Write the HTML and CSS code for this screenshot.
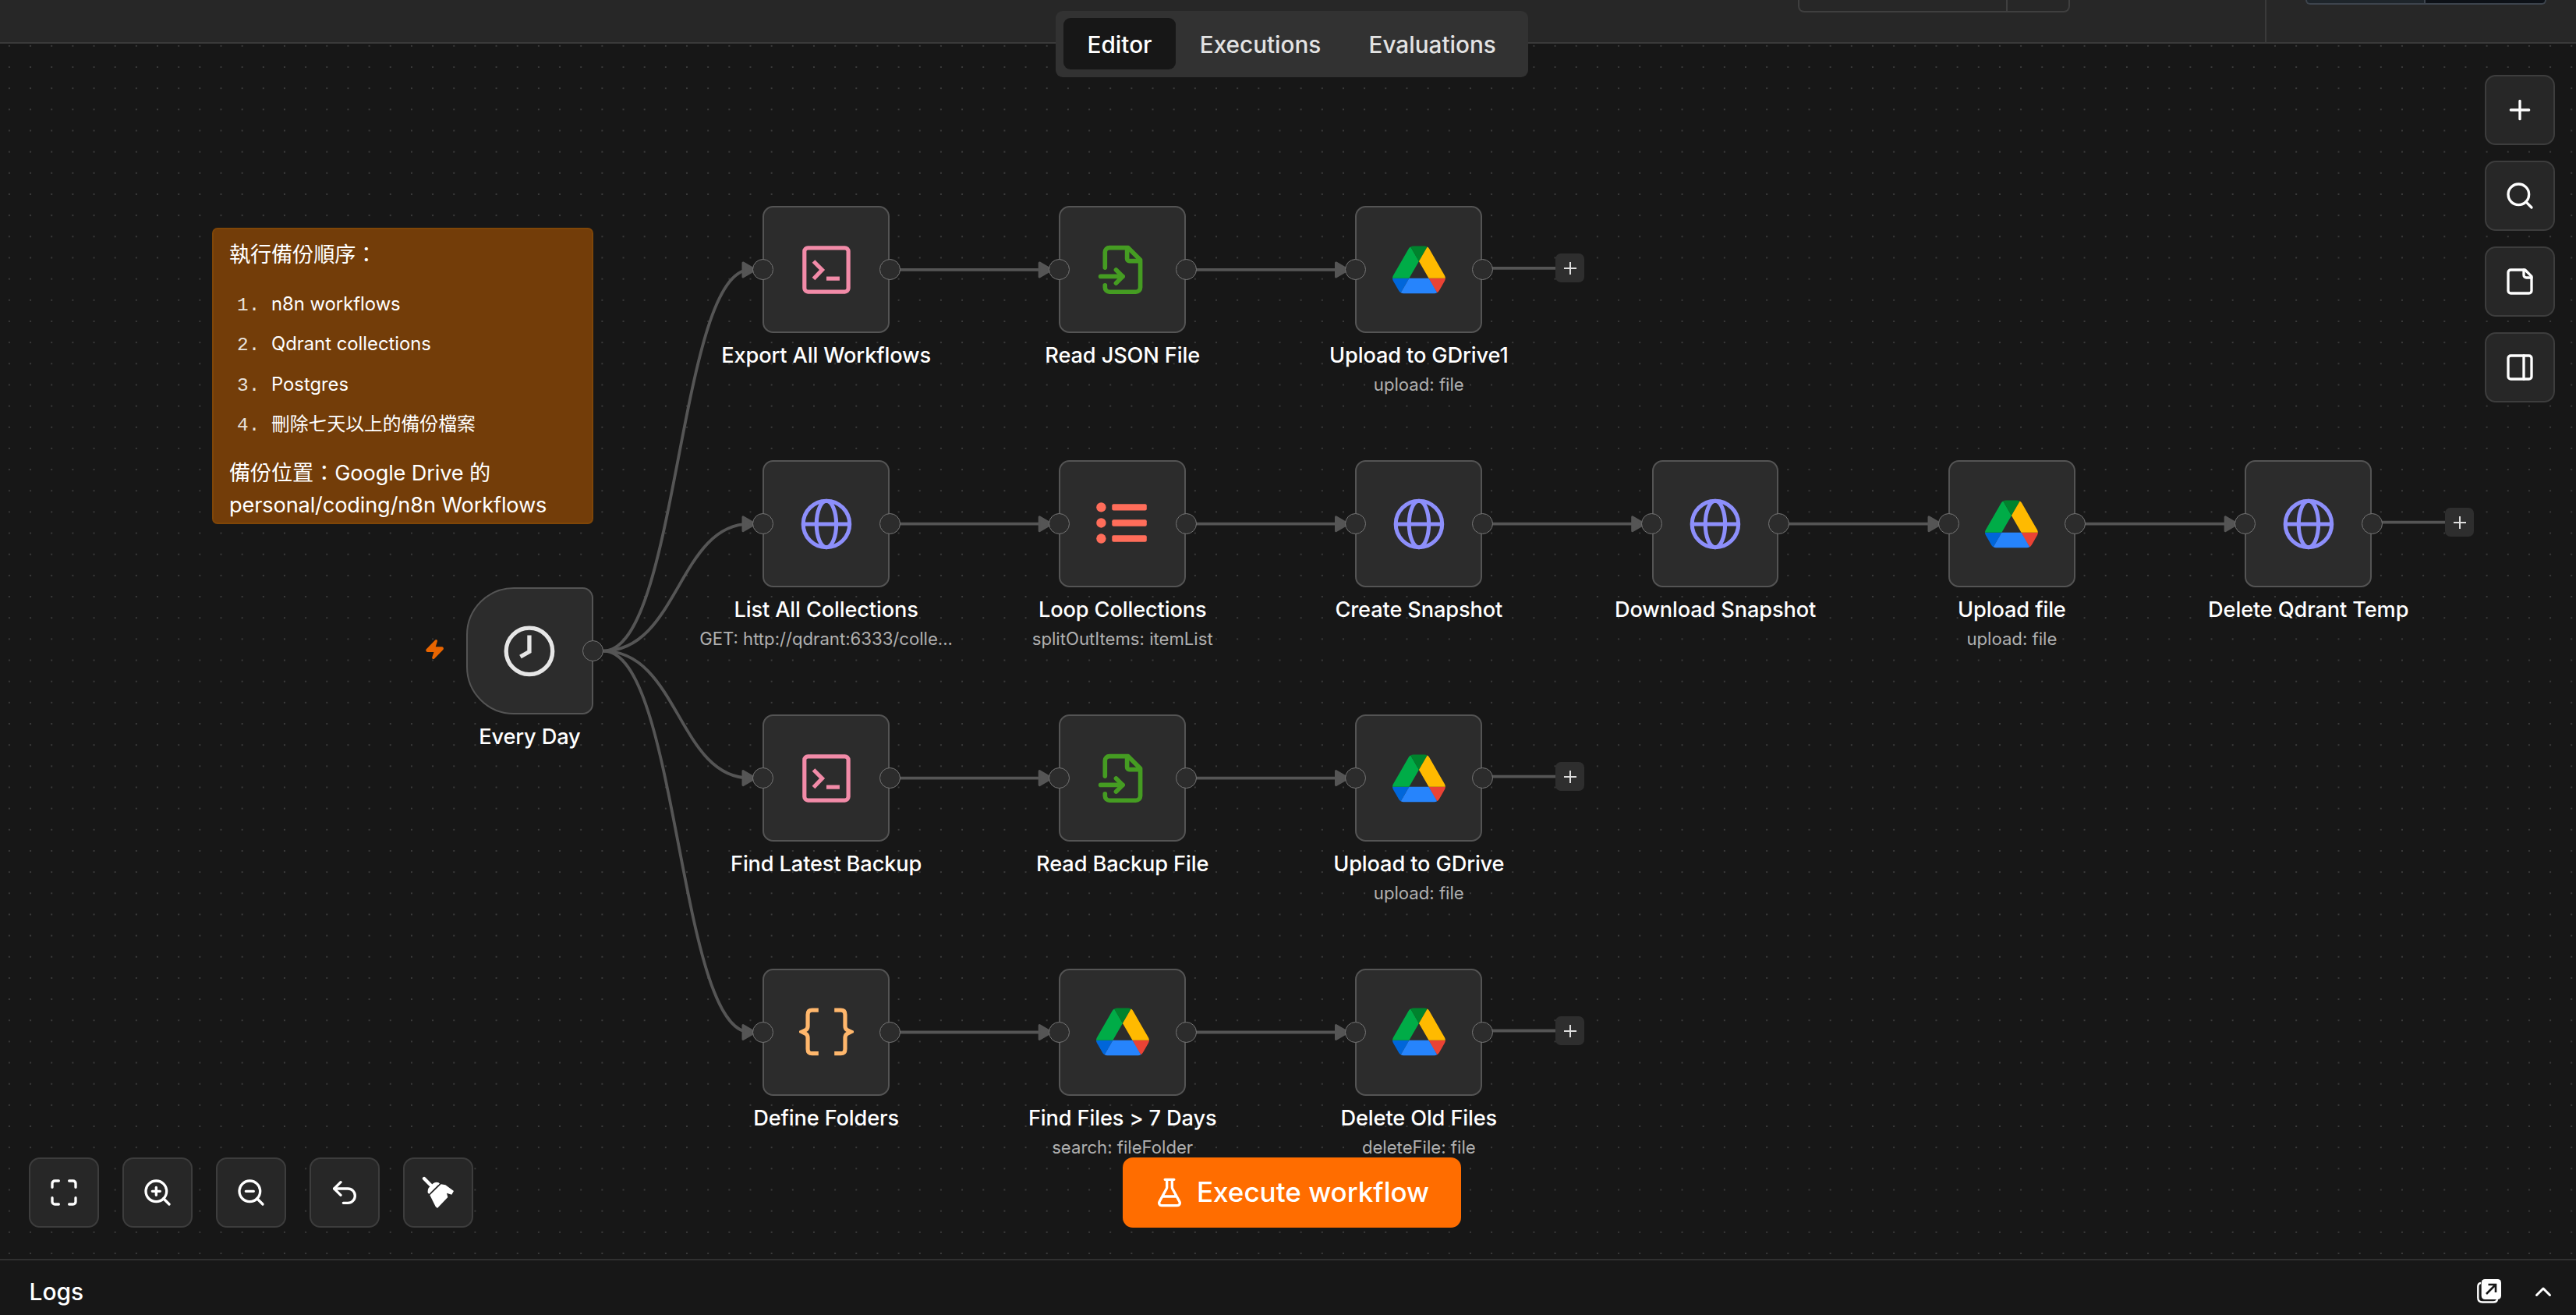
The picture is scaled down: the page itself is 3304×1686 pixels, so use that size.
FILE: index.html
```html
<!DOCTYPE html>
<html lang="zh-Hant">
<head>
<meta charset="utf-8">
<title>Workflow editor</title>
<link rel="stylesheet" href="styles.css">
</head>
<body>
<svg class="sprite" aria-hidden="true">
  <symbol id="i-terminal" viewBox="0 0 68 68"><g fill="none" stroke="#f28ba8" stroke-width="5.2"><rect x="5.8" y="5.8" width="56.4" height="56.4" rx="4.5"/><path d="M17.5 23 28.5 34 17.5 45.5"/><path d="M34 45.2h17"/></g></symbol>
  <symbol id="i-file" viewBox="0 0 24 24"><g fill="none" stroke="#459c22" stroke-width="2" stroke-linecap="round" stroke-linejoin="round"><path d="M4 11V4a2 2 0 0 1 2-2h8.500L20 7.500V20a2 2 0 0 1-2 2H6a2 2 0 0 1-2-2v-1"/><path d="M14 2.500V7a1 1 0 0 0 1 1h4.500"/><path d="M2 15h10"/><path d="m9 18 3-3-3-3"/></g></symbol>
  <symbol id="i-globe" viewBox="0 0 68 68"><g fill="none" stroke="#8d8ffb" stroke-width="5.1"><circle cx="34" cy="34" r="29.800"/><ellipse cx="34" cy="34" rx="12.700" ry="29.800"/><path d="M4 34h60"/></g></symbol>
  <symbol id="i-list" viewBox="0 0 68 68"><g fill="#ff6d5a"><circle cx="6.400" cy="12.400" r="6.200"/><circle cx="6.400" cy="32.500" r="6.200"/><circle cx="6.400" cy="52.600" r="6.200"/><rect x="20.300" y="8.200" width="44.600" height="8.400" rx="2"/><rect x="20.300" y="28.300" width="44.600" height="8.400" rx="2"/><rect x="20.300" y="48.400" width="44.600" height="8.400" rx="2"/></g></symbol>
  <symbol id="i-braces" viewBox="0 0 70 68"><g fill="none" stroke="#ffb76c" stroke-width="5.200"><path d="M24.800 6.200H16.500Q11 6.200 11 12V26.500Q11 30 8.500 31.500L3.500 34 8.500 36.500Q11 38 11 41.500V56Q11 61.800 16.500 61.800H24.800"/><path d="M45.200 6.200H53.500Q59 6.200 59 12V26.500Q59 30 61.500 31.500L66.500 34 61.500 36.500Q59 38 59 41.500V56Q59 61.800 53.500 61.800H45.200"/></g></symbol>
  <symbol id="i-clock" viewBox="0 0 68 68"><g fill="none" stroke="#e6e6e6" stroke-width="5.300"><circle cx="34" cy="34" r="29.800"/><path d="M34 13.500V34.500L22.500 41"/></g></symbol>
  <symbol id="i-drive" viewBox="0 0 87.300 78"><path d="m6.600 66.850 3.850 6.650c.8 1.400 1.950 2.500 3.300 3.300l13.750-23.800h-27.500c0 1.550.4 3.100 1.200 4.500z" fill="#0066da"/><path d="m43.650 25-13.750-23.800c-1.350.8-2.500 1.900-3.300 3.300l-25.400 44a9.060 9.060 0 0 0 -1.200 4.500h27.500z" fill="#00ac47"/><path d="m73.550 76.800c1.350-.8 2.500-1.900 3.300-3.300l1.600-2.750 7.650-13.250c.8-1.400 1.200-2.950 1.200-4.500h-27.502l5.852 11.500z" fill="#ea4335"/><path d="m43.650 25 13.750-23.800c-1.350-.8-2.900-1.200-4.500-1.200h-18.500c-1.600 0-3.150.45-4.500 1.200z" fill="#00832d"/><path d="m59.800 53h-32.300l-13.750 23.800c1.350.8 2.900 1.200 4.500 1.200h50.800c1.600 0 3.150-.45 4.500-1.200z" fill="#2684fc"/><path d="m73.400 26.500-12.700-22c-.8-1.400-1.950-2.500-3.300-3.300l-13.750 23.800 16.150 28h27.450c0-1.550-.4-3.100-1.200-4.500z" fill="#ffba00"/></symbol>
</svg>

<header class="topbar">
  <div class="field"><span class="field-main"></span><span class="field-end"></span></div>
  <div class="star"><span class="star-label"></span><span class="star-count"></span></div>
  <nav class="tabs">
    <a class="tab active">Editor</a>
    <a class="tab">Executions</a>
    <a class="tab">Evaluations</a>
  </nav>
</header>

<main class="canvas">
  <svg class="wires" viewBox="0 56 3304 1558">
    <defs>
      <pattern id="dots" width="27.160" height="27.160" x="-1.680" y="-9.020" patternUnits="userSpaceOnUse"><circle cx="13.580" cy="13.580" r="1" fill="#454545"/></pattern>
      <path id="arrow" d="M-15.500-9 0 0-15.500 9Z" fill="#555" stroke="#555" stroke-width="3" stroke-linejoin="round"/>
    </defs>
    <rect y="56" width="3304" height="1558" fill="url(#dots)"/>
    <g fill="none" stroke="#555" stroke-width="3.800">
      <path d="M774 834.600C870 834.600 870 345.900 962 345.900"/>
      <path d="M774 834.600C870 834.600 870 671.700 962 671.700"/>
      <path d="M774 834.600C870 834.600 870 997.600 962 997.600"/>
      <path d="M774 834.600C870 834.600 870 1323.500 962 1323.500"/>
      <path d="M1141 345.900H1350M1521 345.900H1730M1901 343.900H1998"/>
      <path d="M1141 671.700H1350M1521 671.700H1730M1901 671.700H2110M2282 671.700H2490M2662 671.700H2870M3042 669.700H3138"/>
      <path d="M1141 997.600H1350M1521 997.600H1730M1901 995.600H1998"/>
      <path d="M1141 1323.500H1350M1521 1323.500H1730M1901 1321.500H1998"/>
    </g>
    <use href="#arrow" x="968.500" y="345.900"/><use href="#arrow" x="1348.700" y="345.900"/><use href="#arrow" x="1729" y="345.900"/>
    <use href="#arrow" x="968.500" y="671.700"/><use href="#arrow" x="1348.700" y="671.700"/><use href="#arrow" x="1729" y="671.700"/><use href="#arrow" x="2109.200" y="671.700"/><use href="#arrow" x="2489.500" y="671.700"/><use href="#arrow" x="2869.700" y="671.700"/>
    <use href="#arrow" x="968.500" y="997.600"/><use href="#arrow" x="1348.700" y="997.600"/><use href="#arrow" x="1729" y="997.600"/>
    <use href="#arrow" x="968.500" y="1323.500"/><use href="#arrow" x="1348.700" y="1323.500"/><use href="#arrow" x="1729" y="1323.500"/>
  </svg>

  <article class="sticky">
    <p>執行備份順序：</p>
    <ol>
      <li>n8n workflows</li>
      <li>Qdrant collections</li>
      <li>Postgres</li>
      <li>刪除七天以上的備份檔案</li>
    </ol>
    <p>備份位置：Google Drive 的<br>personal/coding/n8n Workflows</p>
  </article>

  <div class="node trigger c0 rt"><div class="box"><svg class="bolt" viewBox="0 0 24 24"><path d="M4 14a1 1 0 0 1-.78-1.630l9.900-10.200a.5.5 0 0 1 .86.46l-1.920 6.020A1 1 0 0 0 13 10h7a1 1 0 0 1 .78 1.630l-9.900 10.200a.5.5 0 0 1-.86-.46l1.920-6.020A1 1 0 0 0 11 14z"/></svg><svg class="ico"><use href="#i-clock"/></svg><i class="port out"></i></div><h3>Every Day</h3></div>

  <div class="node c1 r1"><div class="box"><i class="port in"></i><svg class="ico"><use href="#i-terminal"/></svg><i class="port out"></i></div><h3>Export All Workflows</h3></div>
  <div class="node c2 r1"><div class="box"><i class="port in"></i><svg class="ico"><use href="#i-file"/></svg><i class="port out"></i></div><h3>Read JSON File</h3></div>
  <div class="node c3 r1"><div class="box"><i class="port in"></i><svg class="ico"><use href="#i-drive"/></svg><i class="port out"></i><b class="add"></b></div><h3>Upload to GDrive1</h3><p>upload: file</p></div>

  <div class="node c1 r2"><div class="box"><i class="port in"></i><svg class="ico"><use href="#i-globe"/></svg><i class="port out"></i></div><h3>List All Collections</h3><p>GET: http://qdrant:6333/colle...</p></div>
  <div class="node c2 r2"><div class="box"><i class="port in"></i><svg class="ico"><use href="#i-list"/></svg><i class="port out"></i></div><h3>Loop Collections</h3><p>splitOutItems: itemList</p></div>
  <div class="node c3 r2"><div class="box"><i class="port in"></i><svg class="ico"><use href="#i-globe"/></svg><i class="port out"></i></div><h3>Create Snapshot</h3></div>
  <div class="node c4 r2"><div class="box"><i class="port in"></i><svg class="ico"><use href="#i-globe"/></svg><i class="port out"></i></div><h3>Download Snapshot</h3></div>
  <div class="node c5 r2"><div class="box"><i class="port in"></i><svg class="ico"><use href="#i-drive"/></svg><i class="port out"></i></div><h3>Upload file</h3><p>upload: file</p></div>
  <div class="node c6 r2"><div class="box"><i class="port in"></i><svg class="ico"><use href="#i-globe"/></svg><i class="port out"></i><b class="add"></b></div><h3>Delete Qdrant Temp</h3></div>

  <div class="node c1 r3"><div class="box"><i class="port in"></i><svg class="ico"><use href="#i-terminal"/></svg><i class="port out"></i></div><h3>Find Latest Backup</h3></div>
  <div class="node c2 r3"><div class="box"><i class="port in"></i><svg class="ico"><use href="#i-file"/></svg><i class="port out"></i></div><h3>Read Backup File</h3></div>
  <div class="node c3 r3"><div class="box"><i class="port in"></i><svg class="ico"><use href="#i-drive"/></svg><i class="port out"></i><b class="add"></b></div><h3>Upload to GDrive</h3><p>upload: file</p></div>

  <div class="node c1 r4"><div class="box"><i class="port in"></i><svg class="ico braces"><use href="#i-braces"/></svg><i class="port out"></i></div><h3>Define Folders</h3></div>
  <div class="node c2 r4"><div class="box"><i class="port in"></i><svg class="ico"><use href="#i-drive"/></svg><i class="port out"></i></div><h3>Find Files &gt; 7 Days</h3><p>search: fileFolder</p></div>
  <div class="node c3 r4"><div class="box"><i class="port in"></i><svg class="ico"><use href="#i-drive"/></svg><i class="port out"></i><b class="add"></b></div><h3>Delete Old Files</h3><p>deleteFile: file</p></div>

  <aside class="tools">
    <button class="btn"><svg viewBox="0 0 24 24"><path d="M5 12h14M12 5v14"/></svg></button>
    <button class="btn"><svg viewBox="0 0 24 24"><circle cx="11" cy="11" r="8"/><path d="m21 21-4.300-4.300"/></svg></button>
    <button class="btn"><svg viewBox="0 0 24 24"><path d="M16 3H5a2 2 0 0 0-2 2v14a2 2 0 0 0 2 2h14a2 2 0 0 0 2-2V8Z"/><path d="M15 3v4a2 2 0 0 0 2 2h4"/></svg></button>
    <button class="btn"><svg viewBox="0 0 24 24"><rect x="3" y="3" width="18" height="18" rx="2"/><path d="M15 3v18"/></svg></button>
  </aside>

  <div class="zoombar">
    <button class="btn"><svg viewBox="0 0 24 24"><path d="M8 3H5a2 2 0 0 0-2 2v3M21 8V5a2 2 0 0 0-2-2h-3M3 16v3a2 2 0 0 0 2 2h3M16 21h3a2 2 0 0 0 2-2v-3"/></svg></button>
    <button class="btn"><svg viewBox="0 0 24 24"><circle cx="11" cy="11" r="8"/><path d="m21 21-4.350-4.350M11 8v6M8 11h6"/></svg></button>
    <button class="btn"><svg viewBox="0 0 24 24"><circle cx="11" cy="11" r="8"/><path d="m21 21-4.350-4.350M8 11h6"/></svg></button>
    <button class="btn"><svg viewBox="0 0 24 24"><path d="M9 14 4 9l5-5"/><path d="M4 9h10.500a5.500 5.500 0 0 1 0 11H11"/></svg></button>
    <button class="btn"><svg class="broom" viewBox="75 75 126 126"><path d="M84 84 110 110" stroke-width="13"/><path d="M137 104Q128 101 120 108L107 121Q101 128 103 137" stroke-width="9"/><path class="solid" d="M118 104 136 100 144 103 103 143 98 138 101 122Z"/><path class="solid" d="M149 106 166 109 198 132 190 146 171 140 175 156 135 198 128 192 106 148Z"/></svg></button>
  </div>

  <button class="execute"><svg viewBox="0 0 24 24"><path d="M14 2v6a2 2 0 0 0 .245.960l5.510 10.080A2 2 0 0 1 18 22H6a2 2 0 0 1-1.755-2.960l5.510-10.080A2 2 0 0 0 10 8V2M6.453 15h11.094M8.500 2h7"/></svg><span>Execute workflow</span></button>
</main>

<footer class="logs">
  <span>Logs</span>
  <div class="logs-actions">
    <svg class="popout" viewBox="0 0 31 31"><path d="M5 5Q1.300 5.500 1.300 9.500V24Q1.300 29.500 7 29.500H21Q25.500 29.500 26 26" fill="none" stroke="#fff" stroke-width="2.400"/><rect x="5.700" width="25.300" height="26" rx="4.500" fill="#fff"/><path d="M12 19 23.500 7.500M14.500 7H24V17" fill="none" stroke="#171717" stroke-width="2.600"/></svg>
    <svg class="chevron" viewBox="0 0 22 14"><path d="M2.500 11.500 11 3 19.500 11.500"/></svg>
  </div>
</footer>
</body>
</html>
```

FILE: styles.css
```css
* { box-sizing: border-box; }

body {
  margin: 0;
  width: 3304px;
  height: 1686px;
  overflow: hidden;
  display: flex;
  flex-direction: column;
  background: #171717;
  color: #fff;
  font-family: Inter, "Noto Sans CJK TC", sans-serif;
}

.sprite { display: none; }

/* top bar */
.topbar {
  position: relative;
  z-index: 2;
  flex: none;
  height: 56px;
  display: flex;
  justify-content: flex-end;
  align-items: flex-start;
  background: #272727;
  border-bottom: 2px solid #3a3a3a;
}

.field {
  display: flex;
  width: 349px;
  height: 16px;
  margin-right: 250px;
  border: 2px solid #3f3f3f;
  border-top: 0;
  border-radius: 0 0 8px 8px;
}
.field-main { flex: 1; }
.field-end { width: 80px; border-left: 2px solid #3f3f3f; }

.star {
  width: 399px;
  height: 54px;
  padding: 0 38px 0 50px;
  border-left: 2px solid #3a3a3a;
  display: flex;
}
.star span { height: 6px; border: 2px solid #3d444d; border-top: 0; }
.star-label { width: 154px; background: #1e252b; border-radius: 0 0 0 6px; }
.star .star-count { flex: 1; background: #0d1117; border-left: 0; border-radius: 0 0 6px 0; }

.tabs {
  position: absolute;
  left: 1354px;
  top: 14px;
  width: 606px;
  height: 85px;
  padding: 9px 10px;
  display: flex;
  background: #323232;
  border-radius: 9px;
}
.tab {
  height: 66px;
  padding: 1px 30.600px 0;
  line-height: 66px;
  font-size: 29.700px;
  font-weight: 500;
  color: #e3e3e3;
  border-radius: 9px;
}
.tab.active { background: #171717; color: #fff; }

/* canvas */
.canvas { position: relative; flex: 1; }
.wires { position: absolute; inset: 0; width: 3304px; height: 1558px; }

.sticky {
  position: absolute;
  left: 272px;
  top: 236px;
  width: 489px;
  height: 380px;
  padding: 13px 20px 0;
  background: #733d09;
  border: 2px solid #804607;
  border-radius: 7px;
  font-size: 27.200px;
  line-height: 40.800px;
  overflow: hidden;
}
.sticky p { margin: 0; white-space: nowrap; letter-spacing: -0.150px; }
.sticky ol {
  margin: 26px 0 27.500px;
  padding-left: 54px;
  font-size: 23.800px;
  line-height: 31px;
}
.sticky li { margin-bottom: 20.500px; height: 31px; }
.sticky li::marker { font-family: "Liberation Mono", monospace; font-size: 24.400px; color: #e8e2db; }

.node {
  position: absolute;
  width: 162.800px;
  display: flex;
  flex-direction: column;
  align-items: center;
}
.c0 { left: 598px; } .c1 { left: 978.200px; } .c2 { left: 1358.300px; } .c3 { left: 1738.400px; }
.c4 { left: 2118.700px; } .c5 { left: 2499px; } .c6 { left: 2879.300px; }
.r1 { top: 208.300px; } .r2 { top: 534.200px; } .rt { top: 697.100px; } .r3 { top: 860.100px; } .r4 { top: 1186px; }

.box {
  position: relative;
  width: 162.800px;
  height: 162.800px;
  display: flex;
  align-items: center;
  justify-content: center;
  background: #2c2c2c;
  border: 2px solid #545454;
  border-radius: 13.600px;
}
.trigger .box { border-radius: 61px 13.600px 13.600px 61px; }
.ico { width: 67.900px; height: 67.900px; }
.ico.braces { width: 70px; }

.port {
  position: absolute;
  top: 65.900px;
  width: 27px;
  height: 27px;
  background: #2c2c2c;
  border: 1px solid #767676;
  border-radius: 50%;
}
.port.in { left: -15.300px; }
.port.out { right: -15.600px; }

.add {
  position: absolute;
  left: 255px;
  top: 59px;
  width: 37px;
  height: 37px;
  border-radius: 7px;
  background:
    linear-gradient(#dedede, #dedede) center / 16px 2px no-repeat,
    linear-gradient(#dedede, #dedede) center / 2px 16px no-repeat,
    #2e2e2e;
}

.bolt {
  position: absolute;
  left: -56px;
  top: 64px;
  width: 27.200px;
  height: 27.200px;
  fill: #e96500;
  stroke: #e96500;
  stroke-width: 2;
  stroke-linejoin: round;
}

.node h3 {
  margin: 12px 0 0;
  font-size: 27.200px;
  line-height: 34px;
  font-weight: 500;
  letter-spacing: -0.130px;
  white-space: nowrap;
}
.node p {
  margin: 6px 0 0;
  font-size: 22.150px;
  line-height: 29px;
  color: #b0b0b0;
  white-space: nowrap;
}

/* floating controls */
.btn {
  width: 90px;
  height: 90px;
  padding: 0;
  display: flex;
  align-items: center;
  justify-content: center;
  background: #272727;
  border: 2.500px solid #3d3d3d;
  border-radius: 14px;
}
.btn svg {
  width: 40px;
  height: 40px;
  fill: none;
  stroke: #fff;
  stroke-width: 2;
  stroke-linecap: round;
  stroke-linejoin: round;
}
.btn .broom { width: 42px; height: 42px; }
.broom .solid { fill: #fff; stroke: none; }

.tools {
  position: absolute;
  left: 3187px;
  top: 40px;
  display: flex;
  flex-direction: column;
  gap: 20px;
}
.zoombar {
  position: absolute;
  left: 37px;
  top: 1428px;
  display: flex;
  gap: 30px;
}

.execute {
  position: absolute;
  left: 1440px;
  top: 1428px;
  width: 434px;
  height: 90px;
  padding: 0 0 0 40px;
  display: flex;
  align-items: center;
  gap: 15px;
  border: 0;
  border-radius: 13px;
  background: #ff6d00;
  color: #fff;
  font: 500 35px Inter, sans-serif;
  white-space: nowrap;
}
.execute span { padding-bottom: 2px; }
.execute svg {
  flex: none;
  width: 40px;
  height: 40px;
  fill: none;
  stroke: currentColor;
  stroke-width: 2;
  stroke-linecap: round;
  stroke-linejoin: round;
}

/* logs */
.logs {
  flex: none;
  height: 72px;
  padding: 9px 31px 0 37.500px;
  display: flex;
  align-items: center;
  justify-content: space-between;
  border-top: 2px solid #303030;
  font-size: 29.900px;
  font-weight: 500;
}
.logs-actions { display: flex; align-items: center; gap: 43.500px; }
.popout { width: 31px; height: 31px; }
.chevron {
  width: 22px;
  height: 14px;
  fill: none;
  stroke: #fff;
  stroke-width: 3;
  stroke-linecap: round;
  stroke-linejoin: round;
}
```
